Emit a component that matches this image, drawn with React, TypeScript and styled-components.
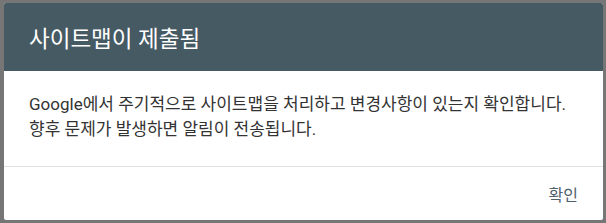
import React from "react";
import styled, { createGlobalStyle } from "styled-components";

const Global = createGlobalStyle`
  html, body { margin: 0; padding: 0; }
  body {
    background: #767676;
    font-family: Roboto, "Noto Sans CJK KR", "Noto Sans", sans-serif;
  }
`;

const Backdrop = styled.div`
  height: 223px;
  padding: 3px 3px 0 4px;
  box-sizing: border-box;
`;

const Dialog = styled.div`
  width: 599px;
  height: 217px;
  background: #ffffff;
  display: flex;
  flex-direction: column;
  border-radius: 2px;
  overflow: hidden;
`;

const Header = styled.div`
  height: 68px;
  background: #465a64;
  display: flex;
  align-items: center;
  padding: 0 25px;
  box-sizing: border-box;
`;

const Title = styled.h2`
  margin: 0;
  color: #ffffff;
  font-size: 22.5px;
  font-weight: 400;
`;

const Body = styled.div`
  height: 96px;
  padding: 21px 25px 0;
  box-sizing: border-box;
  border-bottom: 1px solid #e0e0e0;
`;

const Text = styled.p`
  margin: 0;
  color: #333333;
  font-size: 17px;
  line-height: 25px;
`;

const Footer = styled.div`
  flex: 1;
  display: flex;
  align-items: center;
  justify-content: flex-end;
  padding: 0 25px;
`;

const Button = styled.button`
  background: none;
  border: none;
  font-family: inherit;
  font-size: 16px;
  color: #4f616b;
  padding: 0;
  cursor: pointer;
`;

export default function App() {
  return (
    <>
      <Global />
      <Backdrop>
        <Dialog>
          <Header>
            <Title>사이트맵이 제출됨</Title>
          </Header>
          <Body>
            <Text>
              Google에서 주기적으로 사이트맵을 처리하고 변경사항이 있는지 확인합니다.
              <br />
              향후 문제가 발생하면 알림이 전송됩니다.
            </Text>
          </Body>
          <Footer>
            <Button>확인</Button>
          </Footer>
        </Dialog>
      </Backdrop>
    </>
  );
}
